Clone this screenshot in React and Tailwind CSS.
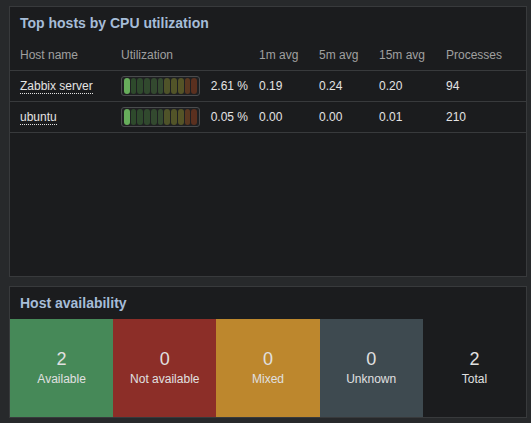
import React from 'react';

const hosts = [
  { name: 'Zabbix server', util: '2.61 %', m1: '0.19', m5: '0.24', m15: '0.20', proc: '94' },
  { name: 'ubuntu', util: '0.05 %', m1: '0.00', m5: '0.00', m15: '0.01', proc: '210' },
];

// bar segment colours, first one is "lit"
const segments = [
  'bg-[#67ad5b]',
  'bg-[#2e4a2c]',
  'bg-[#2f4a2d]',
  'bg-[#31492e]',
  'bg-[#33492f]',
  'bg-[#354b30]',
  'bg-[#4f5329]',
  'bg-[#525428]',
  'bg-[#555427]',
  'bg-[#5a3821]',
  'bg-[#5b301f]',
];

function UtilBar() {
  return (
    <div className="flex h-[20px] w-[79px] items-center gap-[1px] rounded-[3px] border border-[#4a4c4e] bg-[#1f2022] px-[2px]">
      {segments.map((c, i) => (
        <div key={i} className={`h-[16px] flex-1 rounded-[3px] ${c}`} />
      ))}
    </div>
  );
}

const availability = [
  { n: 2, label: 'Available', bg: 'bg-[#468958]' },
  { n: 0, label: 'Not available', bg: 'bg-[#8c2e28]' },
  { n: 0, label: 'Mixed', bg: 'bg-[#bd872d]' },
  { n: 0, label: 'Unknown', bg: 'bg-[#3e4a50]' },
  { n: 2, label: 'Total', bg: 'bg-transparent' },
];

export default function App() {
  const cols = 'grid grid-cols-[101px_138px_60px_60px_67px_1fr] items-center pl-[10px]';

  return (
    <div
      className="flex h-[423px] w-[531px] flex-col gap-[9px] bg-[#27292b] pl-[9px] pr-[4px] pt-[6px] text-[12px] text-[#e4e4e4]"
      style={{ fontFamily: '"Liberation Sans", Arial, sans-serif' }}
    >
      {/* Top hosts panel */}
      <div className="flex h-[271px] flex-col border border-[#383a3c] bg-[#1b1c1e]">
        <div className="flex h-[33px] items-center pl-[10px] text-[14px] font-bold text-[#a6bdd8]">
          Top hosts by CPU utilization
        </div>
        <div className={`${cols} h-[31px] border-b border-[#383a3c] text-[#a0a0a0]`}>
          <div>Host name</div>
          <div>Utilization</div>
          <div>1m avg</div>
          <div>5m avg</div>
          <div>15m avg</div>
          <div>Processes</div>
        </div>
        {hosts.map((h) => (
          <div key={h.name} className={`${cols} h-[31px] border-b border-[#383a3c]`}>
            <div>
              <span className="border-b border-dotted border-[#e4e4e4] leading-[14px]">{h.name}</span>
            </div>
            <div className="flex items-center">
              <UtilBar />
              <div className="w-[48px] text-right">{h.util}</div>
            </div>
            <div>{h.m1}</div>
            <div>{h.m5}</div>
            <div>{h.m15}</div>
            <div>{h.proc}</div>
          </div>
        ))}
      </div>

      {/* Host availability panel */}
      <div className="flex h-[132px] flex-col border border-[#383a3c] bg-[#1b1c1e]">
        <div className="flex h-[32px] items-center pl-[10px] text-[14px] font-bold text-[#a6bdd8]">
          Host availability
        </div>
        <div className="grid flex-1 grid-cols-5">
          {availability.map((a) => (
            <div key={a.label} className={`flex flex-col items-center justify-center ${a.bg}`}>
              <div className="text-[18px] leading-[22px] text-[#e0e0e0]">{a.n}</div>
              <div className="text-[#e0e0e0]">{a.label}</div>
            </div>
          ))}
        </div>
      </div>
    </div>
  );
}
